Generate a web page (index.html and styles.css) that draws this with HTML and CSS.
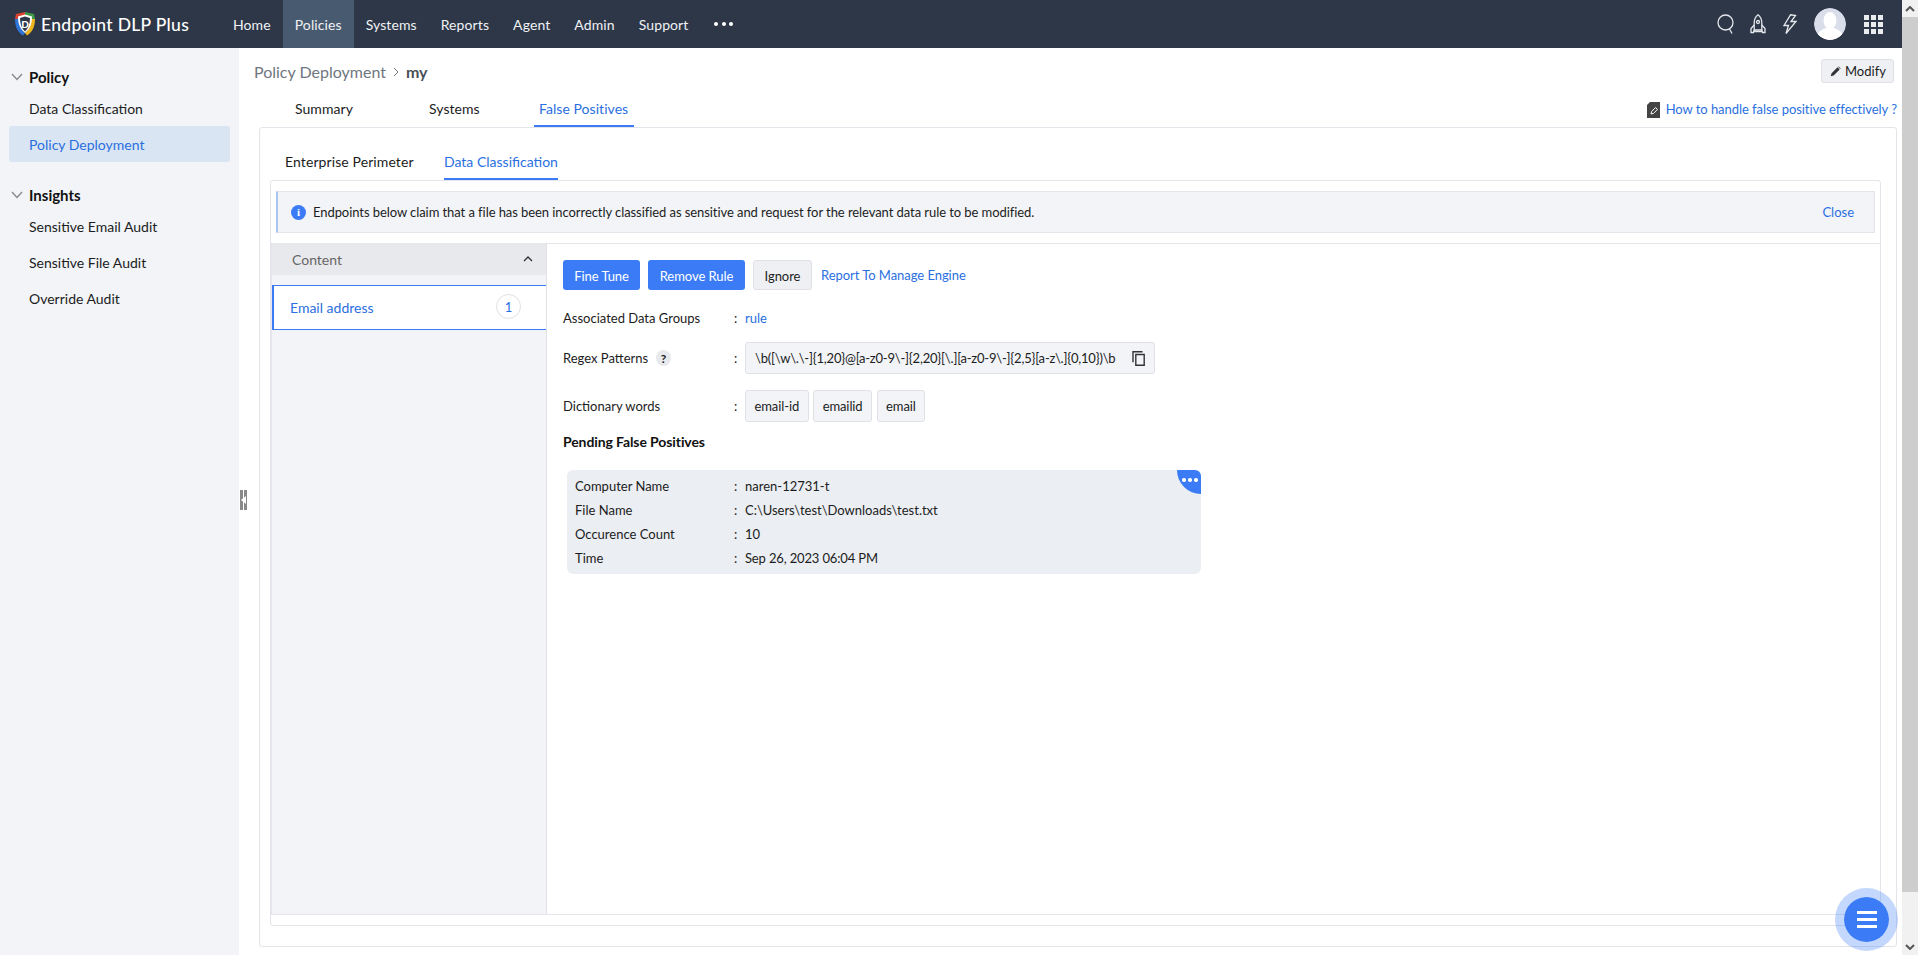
FILE: index.html
```html
<!DOCTYPE html>
<html lang="en">
<head>
<meta charset="utf-8">
<title>Endpoint DLP Plus</title>
<link rel="stylesheet" href="styles.css">
</head>
<body>
<div class="app">
  <div class="page">
    <header class="topbar">
      <div class="brand">
        <svg class="logo" viewBox="0 0 20 24" width="20" height="24">
          <path d="M10 0 1 2 0 7l4 0 1-2 5-1.500z" fill="#d8432f"/>
          <path d="M10 0l9 2 1 5-4 0-1-2-5-1.500z" fill="#3f9b48"/>
          <path d="M0 7c0 8 3 13.500 8 16.500l2-2.500C7 19 4.500 14 4 7z" fill="#2f74d8"/>
          <path d="M20 7c0 8-3 13.500-8 16.500l-2-2.500c3-2 5.500-7 6-14z" fill="#eeb51e"/>
          <path d="M10 2.500 3 4.500c0 8 2.500 13 7 16.500 4.500-3.500 7-8.500 7-16.500z" fill="#fff"/>
          <path d="M10 4.500 5 6c0 6 1.800 10.500 5 13.500 3.200-3 5-7.500 5-13.500z" fill="#2d3748"/>
          <text x="10" y="15.500" class="logo-d">D</text>
        </svg>
        <span class="brand-name">Endpoint DLP Plus</span>
      </div>
      <nav class="nav">
        <a class="nav-item">Home</a>
        <a class="nav-item nav-active">Policies</a>
        <a class="nav-item">Systems</a>
        <a class="nav-item">Reports</a>
        <a class="nav-item">Agent</a>
        <a class="nav-item">Admin</a>
        <a class="nav-item">Support</a>
        <span class="nav-more"><i></i><i></i><i></i></span>
      </nav>
      <div class="tools">
        <svg class="tool tool-search" viewBox="0 0 17 20" width="17" height="20"><circle cx="8.500" cy="8.500" r="7.500"/><path d="M12.500 15 15 19.500"/></svg>
        <svg class="tool tool-rocket" viewBox="0 0 16 20" width="16" height="20"><path d="M8 .8c2.800 2.200 3.800 5 3.800 8V16H4.200V8.800C4.200 5.800 5.200 3 8 .8z"/><circle cx="8" cy="8" r="1.500"/><path d="M4.200 11 1 14.500V18.500h2.500l.7-2.500M11.800 11l3.200 3.500V18.500h-2.500l-.7-2.500M4.200 17.500h7.600"/></svg>
        <svg class="tool tool-bolt" viewBox="0 0 14 20" width="14" height="20"><path d="M7.500 .8 1 11.500h4.500L3 19.500 13 7.500H8L12.500 1.500z"/></svg>
        <div class="avatar"><svg viewBox="0 0 32 32" width="32" height="32"><circle cx="16" cy="16" r="16" fill="#d9deea"/><ellipse cx="16" cy="12.500" rx="6.500" ry="8.500" fill="#fff"/><path d="M3.500 26c3-4.500 7-5 9-6.500h7c2 1.500 6 2 9 6.500a16 16 0 0 1-25 0z" fill="#fff"/></svg></div>
        <div class="apps"><i></i><i></i><i></i><i></i><i></i><i></i><i></i><i></i><i></i></div>
      </div>
    </header>
    <div class="body-row">
      <aside class="sidebar">
        <div class="side-group">
          <svg class="side-chev" viewBox="0 0 12 8" width="12" height="8"><path d="M1 1l5 5.500L11 1"/></svg>
          <span>Policy</span>
        </div>
        <a class="side-item">Data Classification</a>
        <a class="side-item side-active">Policy Deployment</a>
        <div class="side-group side-group-next">
          <svg class="side-chev" viewBox="0 0 12 8" width="12" height="8"><path d="M1 1l5 5.500L11 1"/></svg>
          <span>Insights</span>
        </div>
        <a class="side-item">Sensitive Email Audit</a>
        <a class="side-item">Sensitive File Audit</a>
        <a class="side-item">Override Audit</a>
      </aside>
      <main class="main">
        <div class="collapse-handle"><i></i><i></i><b></b></div>
        <div class="crumb-row">
          <div class="crumbs"><span>Policy Deployment</span><svg class="crumb-sep" viewBox="0 0 6 10" width="6" height="10"><path d="M1 1l4 4-4 4"/></svg><strong>my</strong></div>
          <button class="btn-modify"><svg viewBox="0 0 14 14" width="11" height="11"><path d="M1 13l.8-3.600L9.500 1.700l2.800 2.800-7.700 7.700zM10.300 1l.7-.5 2.500 2.500-.5.700z" fill="#333"/></svg>Modify</button>
        </div>
        <div class="tabs-row">
          <div class="tabs">
            <a class="tab">Summary</a>
            <a class="tab">Systems</a>
            <a class="tab tab-active">False Positives</a>
          </div>
          <a class="help-link"><svg viewBox="0 0 13 16" width="13" height="16"><path d="M3 0h10v16H0V3z" fill="#444"/><path d="M4 12l.6-2.500 4-4 1.900 1.900-4 4z" fill="none" stroke="#fff"/></svg>How to handle false positive effectively ?</a>
        </div>
        <section class="outer-panel">
          <div class="subtabs">
            <a class="subtab">Enterprise Perimeter</a>
            <a class="subtab subtab-active">Data Classification</a>
          </div>
          <div class="inner-panel">
            <div class="notice">
              <span class="notice-icon">i</span>
              <span class="notice-text">Endpoints below claim that a file has been incorrectly classified as sensitive and request for the relevant data rule to be modified.</span>
              <a class="link">Close</a>
            </div>
            <div class="split">
              <div class="rules">
                <div class="rules-head"><span>Content</span><svg viewBox="0 0 10 6" width="10" height="6"><path d="M1 5l4-4 4 4"/></svg></div>
                <div class="rule-item"><span>Email address</span><span class="count">1</span></div>
              </div>
              <div class="detail">
                <div class="actions">
                  <button class="btn btn-primary">Fine Tune</button>
                  <button class="btn btn-primary">Remove Rule</button>
                  <button class="btn btn-plain">Ignore</button>
                  <a class="link report">Report To Manage Engine</a>
                </div>
                <div class="field field-groups">
                  <span class="field-label">Associated Data Groups</span>
                  <span class="colon">:</span>
                  <a class="link">rule</a>
                </div>
                <div class="field field-regex">
                  <span class="field-label">Regex Patterns<span class="hint">?</span></span>
                  <span class="colon">:</span>
                  <span class="chip regex"><span class="regex-text">\b([\w\.\-]{1,20}@[a-z0-9\-]{2,20}[\.][a-z0-9\-]{2,5}[a-z\.]{0,10})\b</span>
                    <svg viewBox="0 0 13 15" width="13" height="15"><path d="M10.500 .8H1v10.500M3.800 3.500h8.400v10.700H3.800z"/></svg>
                  </span>
                </div>
                <div class="field field-dict">
                  <span class="field-label">Dictionary words</span>
                  <span class="colon">:</span>
                  <span class="chips"><span class="chip">email-id</span><span class="chip">emailid</span><span class="chip">email</span></span>
                </div>
                <h3 class="pending-title">Pending False Positives</h3>
                <div class="fp-card">
                  <span class="fp-menu"><i></i><i></i><i></i></span>
                  <div class="fp-row"><span>Computer Name</span><span class="colon">:</span><span>naren-12731-t</span></div>
                  <div class="fp-row"><span>File Name</span><span class="colon">:</span><span>C:\Users\test\Downloads\test.txt</span></div>
                  <div class="fp-row"><span>Occurence Count</span><span class="colon">:</span><span>10</span></div>
                  <div class="fp-row"><span>Time</span><span class="colon">:</span><span class="fp-time">Sep 26, 2023 06:04 PM</span></div>
                </div>
              </div>
            </div>
          </div>
        </section>
        <button class="fab"><i></i><i></i><i></i></button>
      </main>
    </div>
  </div>
  <div class="scrollbar">
    <span class="sb-btn"><svg viewBox="0 0 10 6" width="10" height="6"><path d="M1 5l4-4 4 4"/></svg></span>
    <span class="sb-thumb"></span>
    <span class="sb-btn"><svg viewBox="0 0 10 6" width="10" height="6"><path d="M1 1l4 4 4-4"/></svg></span>
  </div>
</div>
</body>
</html>
```

FILE: styles.css
```css
* { box-sizing: border-box; }
html, body { margin: 0; height: 100%; overflow: hidden; }
body { font-family: Lato, "Open Sans", sans-serif; font-size: 14px; color: #1c1c1c; background: #fff; }
a { text-decoration: none; color: inherit; }
button { font-family: inherit; cursor: pointer; }
.app { display: flex; height: 955px; }
.page { flex: 1; min-width: 0; display: flex; flex-direction: column; }

.topbar { height: 48px; flex: none; background: #2d3748; display: flex; align-items: center; color: #fff; }
.brand { display: flex; align-items: center; width: 221px; padding-left: 15px; flex: none; }
.logo { flex: none; margin-right: 6px; }
.logo-d { font-size: 10px; font-weight: 900; fill: #fff; text-anchor: middle; }
.brand-name { font-size: 17.500px; font-weight: 500; letter-spacing: .3px; white-space: nowrap; }
.nav { display: flex; height: 100%; align-items: stretch; }
.nav-item { display: flex; align-items: center; padding: 1px 12px 0; color: #f0f2f5; font-size: 14px; letter-spacing: .1px; }
.nav-active { background: #485a70; }
.nav-more { display: flex; align-items: center; gap: 3.500px; margin-left: 14px; margin-top: -1px; }
.nav-more i { width: 4px; height: 4px; border-radius: 50%; background: #fff; }
.tools { margin-left: auto; display: flex; align-items: center; padding-right: 19px; }
.tool { fill: none; stroke: #e5e7ec; stroke-width: 1.300; flex: none; }
.tool-search { margin-right: 16px; }
.tool-rocket { margin-right: 17px; }
.tool-bolt { margin-right: 17px; }
.avatar { width: 32px; height: 32px; border-radius: 50%; overflow: hidden; margin-right: 18px; }
.avatar svg { display: block; }
.apps { display: grid; grid-template-columns: repeat(3, 5px); grid-auto-rows: 5px; gap: 2px; }
.apps i { background: #e9ebef; }

.body-row { flex: 1; min-height: 0; display: flex; }
.sidebar { width: 239px; flex: none; background: #f2f4f8; padding: 14px 9px 0; }
.side-group { height: 28px; display: flex; align-items: center; font-weight: 700; font-size: 15px; color: #111; padding: 2px 0 0 2px; }
.side-group-next { margin-top: 18px; }
.side-chev { fill: none; stroke: #888; stroke-width: 1.300; margin-right: 6px; }
.side-item { display: block; height: 36px; line-height: 37px; padding-left: 20px; border-radius: 3px; color: #1c1c1c; white-space: nowrap; }
.side-active { background: #d9e5f2; color: #2a6fe0; }

.main { flex: 1; min-width: 0; position: relative; padding: 0 5px 0 16px; display: flex; flex-direction: column; }
.collapse-handle { position: absolute; left: 1px; top: 442px; width: 7px; height: 20px; display: flex; gap: 1px; }
.collapse-handle i { width: 3px; background: #8a8a8a; }
.collapse-handle b { position: absolute; left: 1px; top: 6px; width: 0; height: 0; border: 4px solid transparent; border-right: 5px solid #fff; border-left: 0; }
.crumb-row { height: 47px; display: flex; align-items: center; justify-content: space-between; flex: none; padding-bottom: 1px; }
.crumbs { display: flex; align-items: center; font-size: 16px; color: #6f7680; margin-left: -1px; }
.crumbs strong { color: #4a4f57; font-weight: 700; }
.crumb-sep { fill: none; stroke: #777; margin: 1px 7px 0 7px; }
.btn-modify { height: 24px; padding: 0 0 0 8px; width: 73px; margin-right: 3px; display: flex; align-items: center; gap: 4px; border: 1px solid #dfe1e6; border-radius: 3px; background: #eef0f4; font-size: 13px; color: #1c1c1c; }
.tabs-row { height: 32px; display: flex; justify-content: space-between; flex: none; }
.tabs { display: flex; height: 32px; }
.tab { height: 32px; line-height: 28px; padding: 0 5px; letter-spacing: .05px; white-space: nowrap; }
.tab:nth-child(1) { margin-left: 35px; width: 68px; }
.tab:nth-child(2) { margin-left: 66px; width: 62px; }
.tab:nth-child(3) { margin-left: 48px; width: 100px; }
.tab-active { color: #2a6fe0; border-bottom: 2px solid #3b7cf6; }
.help-link { display: flex; align-items: flex-start; gap: 6px; color: #2a6fe0; padding-top: 6px; font-size: 13px; letter-spacing: -.05px; white-space: nowrap; }
.help-link svg { margin-top: 1px; }

.outer-panel { flex: 1; margin: 0 0 8px 4px; border: 1px solid #e3e5ea; border-radius: 3px; padding: 0 15px 0 10px; min-height: 0; display: flex; flex-direction: column; width: 1638px; }
.subtabs { height: 52px; flex: none; display: flex; align-items: flex-end; padding-left: 15px; }
.subtab { height: 52px; padding-top: 25px; white-space: nowrap; }
.subtab:first-child { margin-right: 29px; width: 130px; letter-spacing: .1px; }
.subtab-active { color: #2a6fe0; border-bottom: 2px solid #3b7cf6; }
.inner-panel { flex: 1; border: 1px solid #e3e5ea; border-radius: 3px; padding: 10px 0 0; margin-bottom: 20px; display: flex; flex-direction: column; min-height: 0; }
.notice { height: 42px; flex: none; margin: 0 5px; background: #f2f4f8; border: 1px solid #e3e5ea; border-left: 2px solid #a9c6f2; display: flex; align-items: center; padding: 0 20px 0 13px; font-size: 13px; }
.notice-icon { width: 15px; height: 15px; border-radius: 50%; background: #3b7cf6; color: #fff; font: 700 11px/15px "Liberation Serif", serif; text-align: center; flex: none; margin-right: 7px; }
.notice-text { flex: 1; white-space: nowrap; letter-spacing: -.07px; }
.link { color: #2a6fe0; }
.split { flex: 1; min-height: 0; display: flex; margin-top: 10px; margin-bottom: 10px; border-bottom: 1px solid #e3e5ea; }
.rules { width: 276px; flex: none; background: #f2f4f8; border-right: 1px solid #dfe1e6; border-left: 1px solid #e3e5ea; }
.rules-head { height: 32px; background: #e8e9ec; display: flex; align-items: center; justify-content: space-between; padding: 0 13px 0 20px; color: #666; }
.rules-head svg { fill: none; stroke: #333; stroke-width: 1.400; }
.rule-item { height: 45px; margin-top: 10px; background: #fff; border-top: 1px solid #3b7cf6; border-bottom: 1px solid #3b7cf6; border-left: 2px solid #3b7cf6; display: flex; align-items: center; justify-content: space-between; color: #2a6fe0; padding: 0 25px 0 16px; }
.count { width: 25px; height: 25px; border: 1px solid #dfe1e6; border-radius: 50%; font-size: 13px; display: flex; align-items: center; justify-content: center; margin-top: -2px; }
.detail { flex: 1; border-top: 1px solid #e3e5ea; padding: 16px 16px 0; min-width: 0; }
.actions { display: flex; align-items: center; height: 30px; }
.btn { height: 30px; border-radius: 3px; font-size: 13px; margin-right: 8px; padding: 1px 0 0; letter-spacing: -.05px; }
.btn-primary { background: #3b7cf6; color: #fff; border: none; width: 77px; }
.btn-primary + .btn-primary { width: 97px; }
.btn-plain { background: #eef0f4; border: 1px solid #dfe1e6; color: #222; width: 59px; margin-right: 9px; }
.report { font-size: 13px; margin-top: 0; letter-spacing: -.05px; }
.field { display: flex; align-items: center; font-size: 13px; }
.field-label { width: 171px; flex: none; display: flex; align-items: center; }
.colon { width: 11px; flex: none; }
.field-groups { margin-top: 15px; height: 26px; }
.field-regex { margin-top: 11px; height: 32px; }
.field-dict { margin-top: 16px; height: 32px; }
.hint { width: 15px; height: 16px; margin-left: 8px; border-radius: 50%; background: #e8e9ec; font-size: 12px; font-weight: 700; display: flex; align-items: center; justify-content: center; }
.chip { height: 32px; padding: 0 8.500px; background: #f2f4f8; border: 1px solid #dfe1e6; border-radius: 3px; display: inline-flex; align-items: center; font-size: 13px; letter-spacing: -.1px; white-space: nowrap; }
.regex { gap: 17px; padding: 0 9px; }
.regex-text { letter-spacing: -.2px; }
.regex svg { fill: none; stroke: #333; stroke-width: 1.400; }
.chips { display: flex; gap: 4.500px; }
.pending-title { margin: 10px 0 0; font-size: 14px; letter-spacing: -.1px; font-weight: 700; line-height: 20px; color: #111; }
.fp-card { position: relative; margin: 18px 0 0 4px; width: 634px; height: 104px; background: #ebeef2; border-radius: 6px; padding: 4px 8px; overflow: hidden; font-size: 13px; }
.fp-row { display: flex; height: 24px; align-items: center; }
.fp-row span:first-child { width: 159px; flex: none; }
.fp-row .colon { width: 11px; }
.fp-time { letter-spacing: -.15px; }
.fp-menu { position: absolute; right: 0; top: 0; width: 24px; height: 24px; background: #3b7cf6; border-bottom-left-radius: 24px; display: flex; align-items: center; justify-content: center; gap: 2.500px; padding: 0 0 4px 2px; }
.fp-menu i { width: 3.500px; height: 3.500px; border-radius: 50%; background: #fff; }
.fab { position: absolute; right: 4px; bottom: 4px; width: 63px; height: 63px; border: 9px solid rgba(59,124,246,.3); background: #3b7cf6 padding-box; border-radius: 50%; display: flex; flex-direction: column; align-items: center; justify-content: center; gap: 4px; padding: 0; }
.fab i { width: 20px; height: 3px; background: #fff; }

.scrollbar { width: 16px; flex: none; background: #f1f1f1; display: flex; flex-direction: column; }
.sb-btn { height: 17px; flex: none; display: flex; align-items: center; justify-content: center; }
.sb-btn svg { fill: none; stroke: #555; stroke-width: 2; }
.sb-thumb { flex: 1; background: #cdcdcd; margin-bottom: 46px; }
```
